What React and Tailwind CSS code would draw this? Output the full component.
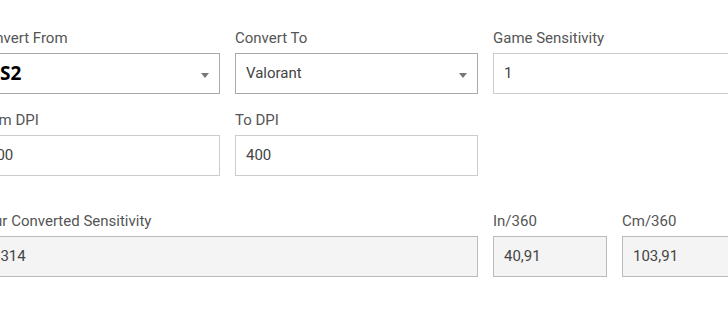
import React, { useState } from 'react';

// Sensitivity converter form, shown scrolled slightly to the right
const Label = ({ children }) => (
  <div className="h-5 leading-5 mb-[5px] text-[15px] text-[#555] whitespace-nowrap">{children}</div>
);

const SelectBox = ({ value, bold }) => (
  <div className="relative h-[41px] border border-[#a9a9a9] bg-white flex items-center pl-[10px] pr-6">
    <span className={bold ? "text-[19px] font-bold text-black font-['Open_Sans',sans-serif]" : 'text-[15px] text-[#444]'}>
      {value}
    </span>
    <span className="absolute right-[10px] top-[19px] w-0 h-0 border-l-[4px] border-r-[4px] border-t-[5px] border-l-transparent border-r-transparent border-t-[#777]" />
  </div>
);

const InputBox = ({ value, readOnly }) => (
  <div
    className={`h-[41px] flex items-center pl-[10px] text-[15px] text-[#444] border ${
      readOnly ? 'bg-[#f4f4f4] border-[#bbb]' : 'bg-white border-[#ccc]'
    }`}
  >
    {value}
  </div>
);

const App = () => {
  const [from] = useState('CS2');
  const [to] = useState('Valorant');

  return (
    <div className="w-[728px] h-[319px] bg-white overflow-hidden font-['Roboto',sans-serif]">
      <div className="ml-[-23px] w-[760px] pt-[28px] grid grid-cols-[repeat(6,113.5px)] gap-x-[15.5px]">
        {/* row 1 */}
        <div className="col-span-2">
          <Label>Convert From</Label>
          <SelectBox value={from} bold />
        </div>
        <div className="col-span-2">
          <Label>Convert To</Label>
          <SelectBox value={to} />
        </div>
        <div className="col-span-2">
          <Label>Game Sensitivity</Label>
          <InputBox value="1" />
        </div>

        {/* row 2 */}
        <div className="col-span-2 mt-4">
          <Label>From DPI</Label>
          <InputBox value="400" />
        </div>
        <div className="col-span-2 mt-4">
          <Label>To DPI</Label>
          <InputBox value="400" />
        </div>
        <div className="col-span-2" />

        {/* row 3 */}
        <div className="col-span-4 mt-[35px]">
          <Label>Your Converted Sensitivity</Label>
          <InputBox value="0.314" readOnly />
        </div>
        <div className="mt-[35px]">
          <Label>In/360</Label>
          <InputBox value="40,91" readOnly />
        </div>
        <div className="mt-[35px]">
          <Label>Cm/360</Label>
          <InputBox value="103,91" readOnly />
        </div>
      </div>
    </div>
  );
};

export default App;
